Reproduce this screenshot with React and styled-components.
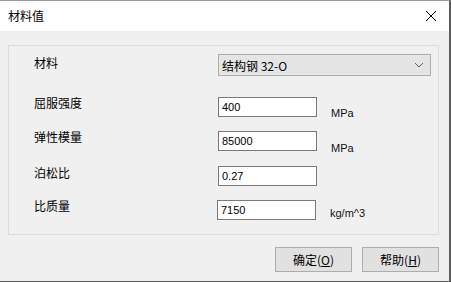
import React from 'react';
import styled, { createGlobalStyle } from 'styled-components';

const GlobalStyles = createGlobalStyle`
  html, body {
    margin: 0;
    padding: 0;
    background: #f0f0f0;
  }
  body {
    font-family: "Noto Sans CJK SC", "Liberation Sans", sans-serif;
  }
`;

const rows = [
  { label: '屈服强度', value: '400', unit: 'MPa', unitTop: 10 },
  { label: '弹性模量', value: '85000', unit: 'MPa', unitTop: 11 },
  { label: '泊松比', value: '0.27', unit: '', labelTop: 0, space: 1 },
  { label: '比质量', value: '7150', unit: 'kg/m^3', unitTop: 7, shift: -1 },
];

const App = () => {
  return (
    <>
      <GlobalStyles />
      <Window>
        <TitleBar>
          <Title>材料值</Title>
          <CloseButton>
            <svg width='12' height='12' viewBox='0 0 12 12'>
              <path d='M1 1 L11 11 M11 1 L1 11' stroke='#000' strokeWidth='1' />
            </svg>
          </CloseButton>
        </TitleBar>
        <Body>
          <Group>
            <Row $first>
              <Label $top={2}>材料</Label>
              <Select>
                <span>结构钢 32-O</span>
                <svg width='10' height='6' viewBox='0 0 10 6'>
                  <path d='M1 1 L5 5 L9 1' stroke='#606060' strokeWidth='1' fill='none' />
                </svg>
              </Select>
            </Row>
            {rows.map((r) => (
              <Row key={r.label} $space={r.space || 0}>
                <Label $top={r.labelTop ?? -1}>{r.label}</Label>
                <Input $shift={r.shift || 0}>{r.value}</Input>
                <Unit $top={r.unitTop || 0}>{r.unit}</Unit>
              </Row>
            ))}
          </Group>
          <Footer>
            <Button>
              确定(<u>O</u>)
            </Button>
            <Button>
              帮助(<u>H</u>)
            </Button>
          </Footer>
        </Body>
      </Window>
    </>
  );
};

const Window = styled.div`
  box-sizing: border-box;
  width: 451px;
  height: 282px;
  display: flex;
  flex-direction: column;
  border-top: 1px solid #9a9a9a;
  border-right: 2px solid #5c5c5c;
  border-bottom: 1px solid #5c5c5c;
  background: #f0f0f0;
`;

const TitleBar = styled.div`
  height: 30px;
  flex: none;
  display: flex;
  align-items: center;
  justify-content: space-between;
  padding: 0 8px;
  background: #ffffff;
`;

const Title = styled.div`
  font-size: 12px;
  color: #000;
  line-height: 14px;
`;

const CloseButton = styled.div`
  width: 14px;
  height: 14px;
  display: flex;
  align-items: center;
  justify-content: center;
  margin-right: 3px;
`;

const Body = styled.div`
  flex: 1;
  display: flex;
  flex-direction: column;
  padding: 14px 10px 0 8px;
`;

const Group = styled.div`
  box-sizing: border-box;
  height: 190px;
  border: 1px solid #dcdcdc;
  padding: 8px 0 0 25px;
  display: flex;
  flex-direction: column;
  gap: 14px;
`;

const Row = styled.div`
  display: grid;
  grid-template-columns: 184px auto 1fr;
  align-items: start;
  height: ${(p) => (p.$first ? '22px' : '20px')};
  margin-top: ${(p) => p.$space || 0}px;
  margin-bottom: ${(p) => (p.$first ? '7px' : '0')};
`;

const Label = styled.div`
  font-size: 12px;
  line-height: 14px;
  color: #000;
  margin-top: ${(p) => p.$top}px;
`;

const Select = styled.div`
  box-sizing: border-box;
  grid-column: 2 / 4;
  width: 213px;
  height: 22px;
  display: flex;
  align-items: center;
  justify-content: space-between;
  padding: 0 6px 0 3px;
  background: #e5e5e5;
  border: 1px solid #adadad;
  font-size: 12px;
  color: #000;
`;

const Input = styled.div`
  box-sizing: border-box;
  width: 99px;
  height: 20px;
  display: flex;
  align-items: center;
  padding-left: 3px;
  margin-left: ${(p) => p.$shift}px;
  background: #ffffff;
  border: 1px solid #7a7a7a;
  font-family: "Liberation Sans", sans-serif;
  font-size: 11px;
  color: #000;
`;

const Unit = styled.div`
  margin: ${(p) => p.$top}px 0 0 14px;
  font-family: "Liberation Sans", sans-serif;
  font-size: 11px;
  line-height: 12px;
  color: #111;
`;

const Footer = styled.div`
  display: flex;
  justify-content: flex-end;
  gap: 10px;
  margin-top: 12px;
`;

const Button = styled.div`
  box-sizing: border-box;
  width: 77px;
  height: 25px;
  display: flex;
  align-items: center;
  justify-content: center;
  background: #e1e1e1;
  border: 1px solid #adadad;
  font-size: 12px;
  color: #000;

  u {
    text-decoration: underline;
  }
`;

export default App;
